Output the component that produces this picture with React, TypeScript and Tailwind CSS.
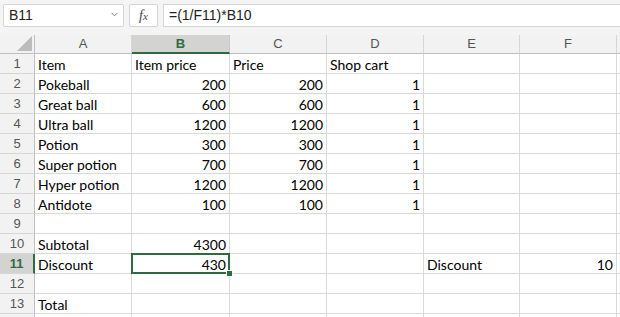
import { ChevronDown } from "lucide-react";

type Cell = { v: string; num?: boolean };

const rows: Cell[][] = [
  [{ v: "Item" }, { v: "Item price" }, { v: "Price" }, { v: "Shop cart" }],
  [{ v: "Pokeball" }, { v: "200", num: true }, { v: "200", num: true }, { v: "1", num: true }],
  [{ v: "Great ball" }, { v: "600", num: true }, { v: "600", num: true }, { v: "1", num: true }],
  [{ v: "Ultra ball" }, { v: "1200", num: true }, { v: "1200", num: true }, { v: "1", num: true }],
  [{ v: "Potion" }, { v: "300", num: true }, { v: "300", num: true }, { v: "1", num: true }],
  [{ v: "Super potion" }, { v: "700", num: true }, { v: "700", num: true }, { v: "1", num: true }],
  [{ v: "Hyper potion" }, { v: "1200", num: true }, { v: "1200", num: true }, { v: "1", num: true }],
  [{ v: "Antidote" }, { v: "100", num: true }, { v: "100", num: true }, { v: "1", num: true }],
  [],
  [{ v: "Subtotal" }, { v: "4300", num: true }],
  [{ v: "Discount" }, { v: "430", num: true }, { v: "" }, { v: "" }, { v: "Discount" }, { v: "10", num: true }],
  [],
  [{ v: "Total" }],
  [],
];

const cols = ["A", "B", "C", "D", "E", "F", ""];
const ui = { fontFamily: "'Liberation Sans', Arial, sans-serif" };
const cellFont = { fontFamily: "Lato, 'Open Sans', sans-serif" };

export default function App() {
  return (
    <div className="w-[620px] h-[317px] overflow-hidden bg-[#f4f4f4]" style={ui}>
      {/* formula bar */}
      <div className="h-[35px] flex items-start pt-[4px] pl-[3px] pr-0">
        <div className="w-[121px] h-[23px] bg-white border border-[#d5d5d5] rounded-[2px] flex items-center justify-between pl-[5px] pr-[3px] text-[14px] text-[#222]">
          <span>B11</span>
          <ChevronDown size={11} strokeWidth={1.6} className="text-[#555] mb-[3px]" />
        </div>
        <div className="ml-[5px] w-[29px] h-[23px] bg-white border border-[#d5d5d5] rounded-[2px] flex items-center justify-center text-[#444]">
          <span className="italic text-[14px]" style={{ fontFamily: "'Liberation Serif', serif" }}>
            f<span className="text-[11px]">x</span>
          </span>
        </div>
        <div className="ml-[5px] flex-1 h-[23px] bg-white border-y border-l border-[#d5d5d5] flex items-center pl-[5px] text-[14px] text-[#222]">
          =(1/F11)*B10
        </div>
      </div>

      {/* grid */}
      <div className="grid grid-cols-[35px_97px_98px_97px_97px_96px_97px_1fr] bg-white">
        {/* header row */}
        <div className="h-[19px] bg-[#f2f2f2] border-r border-b border-[#bfbfbf] relative">
          <svg className="absolute right-[2px] bottom-[2px]" width="15" height="15" viewBox="0 0 15 15">
            <polygon points="15,0 15,15 0,15" fill="#bcbcbc" />
          </svg>
        </div>
        {cols.map((c, i) => (
          <div
            key={i}
            className={
              c === "B"
                ? "h-[19px] bg-[#d3d3d1] border-r border-[#c8c8c8] border-b-2 border-b-[#2f6b3f] flex items-center justify-center text-[13px] font-bold text-[#2f6b3f]"
                : "h-[19px] bg-[#f2f2f2] border-r border-[#d6d6d6] border-b border-b-[#bfbfbf] flex items-center justify-center text-[13px] text-[#555]"
            }
          >
            {c}
          </div>
        ))}

        {rows.map((r, ri) => {
          const n = ri + 1;
          const sel = n === 11;
          return [
            <div
              key={`h${n}`}
              className={
                sel
                  ? "h-[20px] bg-[#d3d3d1] border-r-2 border-r-[#2f6b3f] border-b border-b-[#d6d6d6] flex items-center justify-center text-[13px] font-bold text-[#2f6b3f]"
                  : "h-[20px] bg-[#f2f2f2] border-r border-r-[#bfbfbf] border-b border-b-[#d6d6d6] flex items-center justify-center text-[13px] text-[#555]"
              }
            >
              {n < 14 ? n : ""}
            </div>,
            ...cols.map((_, ci) => {
              const cell = r[ci];
              const isSel = sel && ci === 1;
              return (
                <div
                  key={`${n}-${ci}`}
                  className={`h-[20px] border-r border-b border-[#d9d9d9] relative flex items-center px-[3px] text-[14px] text-black ${
                    cell?.num ? "justify-end" : "justify-start"
                  } ${isSel ? "z-10" : ""}`}
                  style={cellFont}
                >
                  <span className="whitespace-nowrap pt-[1px]">{cell?.v}</span>
                  {isSel && (
                    <>
                      <div className="absolute -left-[1px] -top-[1px] -right-[1px] -bottom-[1px] border-2 border-[#2f6b3f]" />
                      <div className="absolute -right-[4px] -bottom-[4px] w-[7px] h-[7px] bg-[#2f6b3f] border border-white" />
                    </>
                  )}
                </div>
              );
            }),
          ];
        })}
      </div>
    </div>
  );
}
